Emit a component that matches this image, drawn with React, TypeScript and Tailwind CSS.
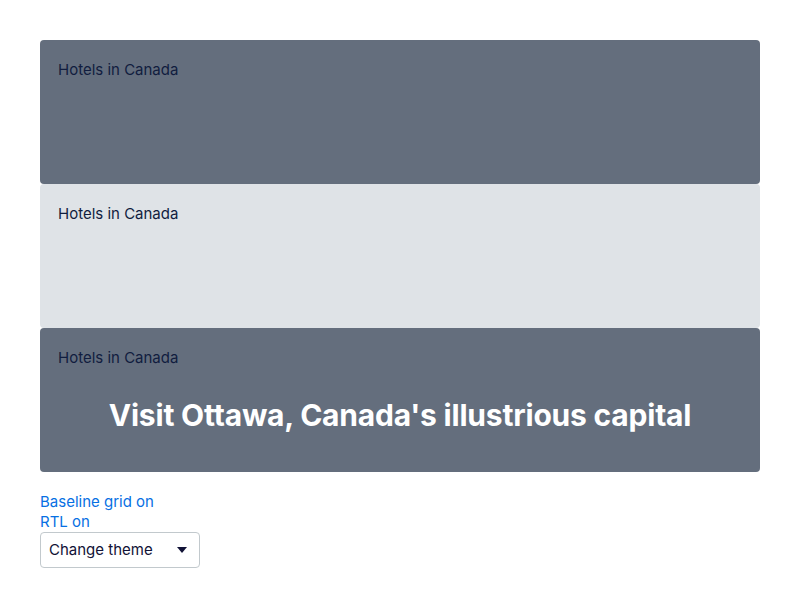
export default function App() {
  const font = { fontFamily: "Inter, 'Noto Sans', sans-serif" };
  return (
    <div className="min-h-screen bg-white p-10" style={font}>
      <div className="flex flex-col">
        <div className="h-36 rounded bg-[#646e7d] px-[18px] pt-5">
          <p className="text-[15px] leading-5 text-[#111d3f]">Hotels in Canada</p>
        </div>
        <div className="h-36 rounded bg-[#dfe3e7] px-[18px] pt-5">
          <p className="text-[15px] leading-5 text-[#111d3f]">Hotels in Canada</p>
        </div>
        <div className="h-36 rounded bg-[#646e7d] px-[18px] pt-5">
          <p className="text-[15px] leading-5 text-[#111d3f]">Hotels in Canada</p>
          <h1 className="mt-[29px] text-center text-[30px] font-bold leading-9 tracking-[-0.2px] text-white">
            Visit Ottawa, Canada's illustrious capital
          </h1>
        </div>
      </div>
      <div className="mt-5 flex flex-col items-start">
        <a className="text-[15px] leading-5 text-[#0770e3]" href="#">Baseline grid on</a>
        <a className="text-[15px] leading-5 text-[#0770e3]" href="#">RTL on</a>
        <div className="flex h-9 w-40 items-center justify-between rounded border border-[#c2c9cd] pl-2 pr-3">
          <span className="text-[15px] text-[#111236]">Change theme</span>
          <svg width="10" height="6" viewBox="0 0 10 6">
            <path d="M0 0h10L5 6z" fill="#111236" />
          </svg>
        </div>
      </div>
    </div>
  );
}
